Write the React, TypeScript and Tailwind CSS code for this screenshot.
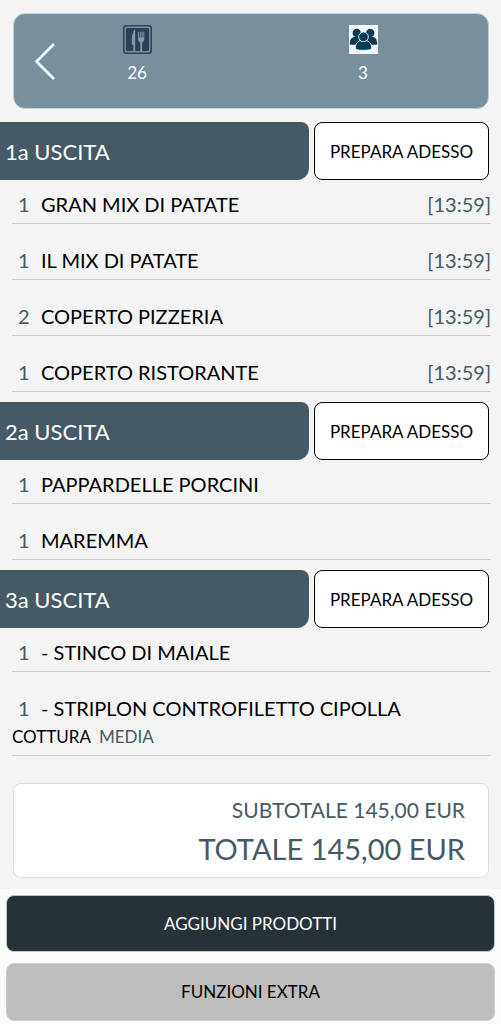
interface OrderItem {
  qty: number;
  name: string;
  time?: string;
  option?: { label: string; value: string };
}

interface Course {
  title: string;
  items: OrderItem[];
}

const courses: Course[] = [
  {
    title: '1a USCITA',
    items: [
      { qty: 1, name: 'GRAN MIX DI PATATE', time: '13:59' },
      { qty: 1, name: 'IL MIX DI PATATE', time: '13:59' },
      { qty: 2, name: 'COPERTO PIZZERIA', time: '13:59' },
      { qty: 1, name: 'COPERTO RISTORANTE', time: '13:59' },
    ],
  },
  {
    title: '2a USCITA',
    items: [
      { qty: 1, name: 'PAPPARDELLE PORCINI' },
      { qty: 1, name: 'MAREMMA' },
    ],
  },
  {
    title: '3a USCITA',
    items: [
      { qty: 1, name: '- STINCO DI MAIALE' },
      {
        qty: 1,
        name: '- STRIPLON CONTROFILETTO CIPOLLA',
        option: { label: 'COTTURA', value: 'MEDIA' },
      },
    ],
  },
];

function TableIcon() {
  return (
    <svg viewBox="0 0 30 30" className="size-[29px]" aria-hidden="true">
      <rect x="0.8" y="0.8" width="28.4" height="28.4" rx="2.5" fill="#7a919d" stroke="#2f4659" strokeWidth="1.6" />
      <rect x="3" y="3" width="24" height="24" rx="2" fill="#2b4054" />
      <path d="M12.6 4.5V27H10.6V20.5H9.2C8.6 14 9.6 7 12.6 4.5Z" fill="#8299a5" />
      <path
        d="M15.6 7H16.6V13H17.4V7H18.4V13H19.2V7H20.2V13H21V7H22V14.5C22 16.5 21 17.6 19.8 18V27H17.8V18C16.6 17.6 15.6 16.5 15.6 14.5Z"
        fill="#8299a5"
      />
    </svg>
  );
}

function GuestsIcon() {
  return (
    <svg viewBox="0 0 30 30" className="size-[29px]" aria-hidden="true">
      <rect width="30" height="30" fill="#f4f6f7" />
      <g fill="#043b56">
        <circle cx="8" cy="8.3" r="4.3" />
        <circle cx="22" cy="8.3" r="4.3" />
        <path d="M0.8 19.6C0.8 15 3 12.4 6 12.4H11V20.4H2Q0.8 20.4 0.8 19.6Z" />
        <path d="M29.2 19.6C29.2 15 27 12.4 24 12.4H19V20.4H28Q29.2 20.4 29.2 19.6Z" />
      </g>
      <g fill="#043b56" stroke="#f4f6f7" strokeWidth="0.9">
        <path d="M6.6 24C6.6 19 9.4 16.4 12 16.4H18C20.6 16.4 23.4 19 23.4 24Q23.4 26.2 15 26.2T6.6 24Z" />
        <circle cx="15" cy="12.2" r="5" />
      </g>
    </svg>
  );
}

function OrderHeader() {
  return (
    <header className="mt-[13px] mr-3 ml-[13px] grid h-24 grid-cols-2 rounded-xl border border-[#c3d0d6] bg-[#78909c] pr-3 pl-[10px] text-white">
      <button
        type="button"
        aria-label="Indietro"
        className="col-start-1 row-start-1 w-10 self-center justify-self-start"
      >
        <svg viewBox="0 0 40 40" className="size-10" fill="none" stroke="currentColor" strokeWidth="2.6">
          <path d="M30 3L12.5 20.5L30 38" />
        </svg>
      </button>
      <div className="col-start-1 row-start-1 flex flex-col items-center justify-self-center pt-[11px]">
        <TableIcon />
        <span className="mt-[7px] text-[17px] leading-6">26</span>
      </div>
      <div className="col-start-2 row-start-1 flex flex-col items-center justify-self-center pt-[11px]">
        <GuestsIcon />
        <span className="mt-[7px] text-[17px] leading-6">3</span>
      </div>
    </header>
  );
}

function CourseSection({ course }: { course: Course }) {
  return (
    <section>
      <div className="flex h-[58px] gap-[5px] pr-3">
        <h2 className="flex flex-1 items-center rounded-tr-lg rounded-br-xl bg-[#455a64] pl-[5px] text-[22px] text-white">
          {course.title}
        </h2>
        <button type="button" className="w-[175px] rounded-lg border border-black bg-white pt-[2px] text-[17px] text-black">
          PREPARA ADESSO
        </button>
      </div>
      <ul className="ml-3 mr-[10px] flex flex-col gap-3">
        {course.items.map((item) => (
          <li key={item.name} className="border-b border-[#cfcfcf] pt-[10px] pb-1">
            <div className="flex pb-px pl-[6px] text-xl leading-7">
              <span className="w-[23px] text-[#455a64]">{item.qty}</span>
              <span className="flex-1 text-black">{item.name}</span>
              {item.time && <span className="text-[#455a64]">[{item.time}]</span>}
            </div>
            {item.option && (
              <div className="flex gap-2 text-[17px] leading-7">
                <span className="text-black">{item.option.label}</span>
                <span className="text-[#455a64]">{item.option.value}</span>
              </div>
            )}
          </li>
        ))}
      </ul>
    </section>
  );
}

export default function App() {
  return (
    <div className="flex min-h-screen flex-col bg-[#fafafa] font-['Lato',sans-serif] [text-rendering:optimizeLegibility]">
      <main className="flow-root bg-[#f4f4f4] pb-[11px]">
        <OrderHeader />
        <div className="mt-[13px] flex flex-col gap-[10px]">
          {courses.map((course) => (
            <CourseSection key={course.title} course={course} />
          ))}
        </div>
        <div className="mt-[27px] mr-3 ml-[13px] rounded-lg border border-[#dddddd] bg-white px-[23px] py-2 text-right text-[#455a64]">
          <p className="text-[21px] leading-9">SUBTOTALE 145,00 EUR</p>
          <p className="text-[29px] leading-[41px]">TOTALE 145,00 EUR</p>
        </div>
      </main>
      <footer className="flex flex-col gap-[11px] px-[6px] pt-[6px] pb-[3px] text-[17px]">
        <button type="button" className="h-[57px] rounded-lg border border-[#b9c6cc] bg-[#263238] text-white">
          AGGIUNGI PRODOTTI
        </button>
        <button type="button" className="h-[58px] rounded-lg border border-[#c5d0d5] bg-[#bdbdbd] text-black">
          FUNZIONI EXTRA
        </button>
      </footer>
    </div>
  );
}
